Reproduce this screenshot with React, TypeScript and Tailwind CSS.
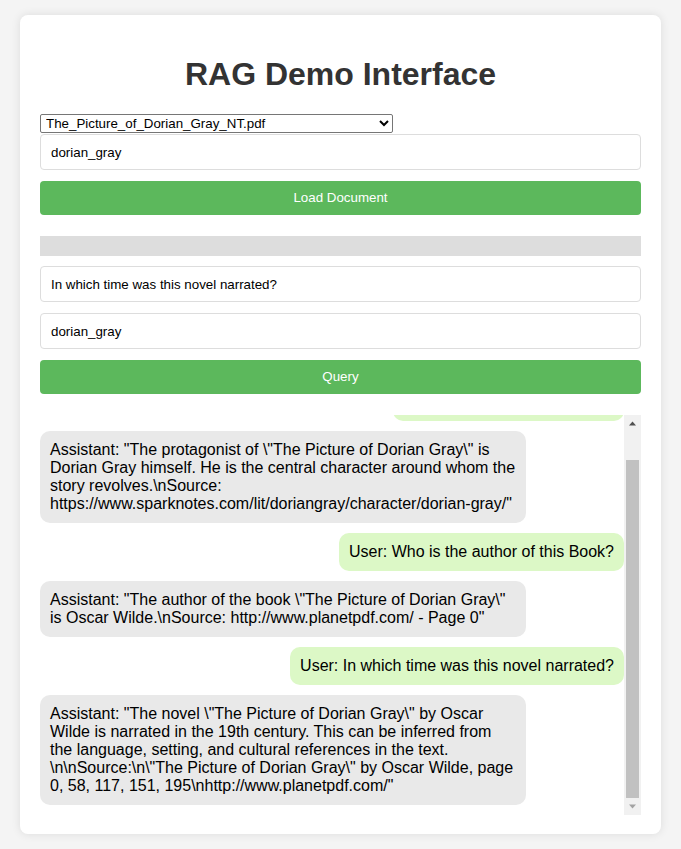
import { useLayoutEffect, useRef } from 'react';

type Message = { role: 'user' | 'assistant'; text: string };

const messages: Message[] = [
  { role: 'user', text: 'User: Who is the protagonist?' },
  {
    role: 'assistant',
    text: 'Assistant: "The protagonist of \\"The Picture of Dorian Gray\\" is Dorian Gray himself. He is the central character around whom the story revolves.\\nSource: https://www.sparknotes.com/lit/doriangray/character/dorian-gray/"',
  },
  { role: 'user', text: 'User: Who is the author of this Book?' },
  {
    role: 'assistant',
    text: 'Assistant: "The author of the book \\"The Picture of Dorian Gray\\" is Oscar Wilde.\\nSource: http://www.planetpdf.com/ - Page 0"',
  },
  { role: 'user', text: 'User: In which time was this novel narrated?' },
  {
    role: 'assistant',
    text: 'Assistant: "The novel \\"The Picture of Dorian Gray\\" by Oscar Wilde is narrated in the 19th century. This can be inferred from the language, setting, and cultural references in the text. \\n\\nSource:\\n\\"The Picture of Dorian Gray\\" by Oscar Wilde, page 0, 58, 117, 151, 195\\nhttp://www.planetpdf.com/"',
  },
];

export default function App() {
  const chatRef = useRef<HTMLDivElement>(null);

  useLayoutEffect(() => {
    // keep the chat scrolled to the newest message
    if (chatRef.current) chatRef.current.scrollTop = chatRef.current.scrollHeight;
  }, []);

  return (
    <div className="min-h-screen bg-[#f4f4f4] pt-[15px] px-[20px] pb-[15px] font-['Liberation_Sans',Arial,sans-serif] text-black">
      <div className="bg-white rounded-[8px] shadow-[0_0_10px_rgba(0,0,0,0.1)] px-[20px] pt-[20px] pb-[19px]">
        <h1 className="text-[32px] leading-[37px] font-bold text-[#333] text-center mt-[21px] mb-[21px]">
          RAG Demo Interface
        </h1>

        <select
          defaultValue="dorian"
          className="block w-[353px] h-[19px] text-[13.33px] leading-[15px] bg-white border border-[#767676] rounded-[2px] pl-[1px] text-black"
        >
          <option value="dorian">The_Picture_of_Dorian_Gray_NT.pdf</option>
        </select>

        <input
          type="text"
          defaultValue="dorian_gray"
          className="block w-full h-[36px] mt-px px-[10px] text-[13.33px] border border-[#ddd] rounded-[4px] outline-none"
        />

        <button className="block w-full h-[34px] mt-[11px] bg-[#5cb85c] text-white text-[13.33px] rounded-[4px]">
          Load Document
        </button>

        <div className="w-full h-[20px] mt-[21px] bg-[#ddd]" />

        <input
          type="text"
          defaultValue="In which time was this novel narrated?"
          className="block w-full h-[36px] mt-[10px] px-[10px] text-[13.33px] border border-[#ddd] rounded-[4px] outline-none"
        />

        <input
          type="text"
          defaultValue="dorian_gray"
          className="block w-full h-[36px] mt-[11px] px-[10px] text-[13.33px] border border-[#ddd] rounded-[4px] outline-none"
        />

        <button className="block w-full h-[34px] mt-[11px] bg-[#5cb85c] text-white text-[13.33px] rounded-[4px]">
          Query
        </button>

        <div className="flex h-[400px] mt-[21px]">
          <div
            ref={chatRef}
            className="flex-1 min-w-0 overflow-y-scroll [scrollbar-width:none] [&::-webkit-scrollbar]:hidden"
          >
            {messages.map((m, i) => (
              <div key={i} className={m.role === 'user' ? 'flex justify-end' : 'flex justify-start'}>
                <div
                  className={
                    m.role === 'user'
                      ? 'max-w-[486px] mb-[10px] p-[10px] rounded-[10px] bg-[#dcf8c6] text-[16px] leading-[18px]'
                      : 'max-w-[486px] mb-[10px] p-[10px] rounded-[10px] bg-[#e9e9e9] text-[16px] leading-[18px]'
                  }
                >
                  {m.text}
                </div>
              </div>
            ))}
          </div>

          {/* scrollbar, scrolled to the bottom */}
          <div className="w-[17px] shrink-0 flex flex-col bg-[#f1f1f1]">
            <div className="h-[17px] flex items-center justify-center">
              <svg width="7" height="5" viewBox="0 0 7 5">
                <path d="M3.5 0.5 L7 4.5 L0 4.5 Z" fill="#505050" />
              </svg>
            </div>
            <div className="flex-1 flex flex-col justify-end">
              <div className="h-[338px] mx-[2px] bg-[#c1c1c1]" />
            </div>
            <div className="h-[17px] flex items-center justify-center">
              <svg width="7" height="5" viewBox="0 0 7 5">
                <path d="M0 0.5 L7 0.5 L3.5 4.5 Z" fill="#a3a3a3" />
              </svg>
            </div>
          </div>
        </div>
      </div>
    </div>
  );
}
